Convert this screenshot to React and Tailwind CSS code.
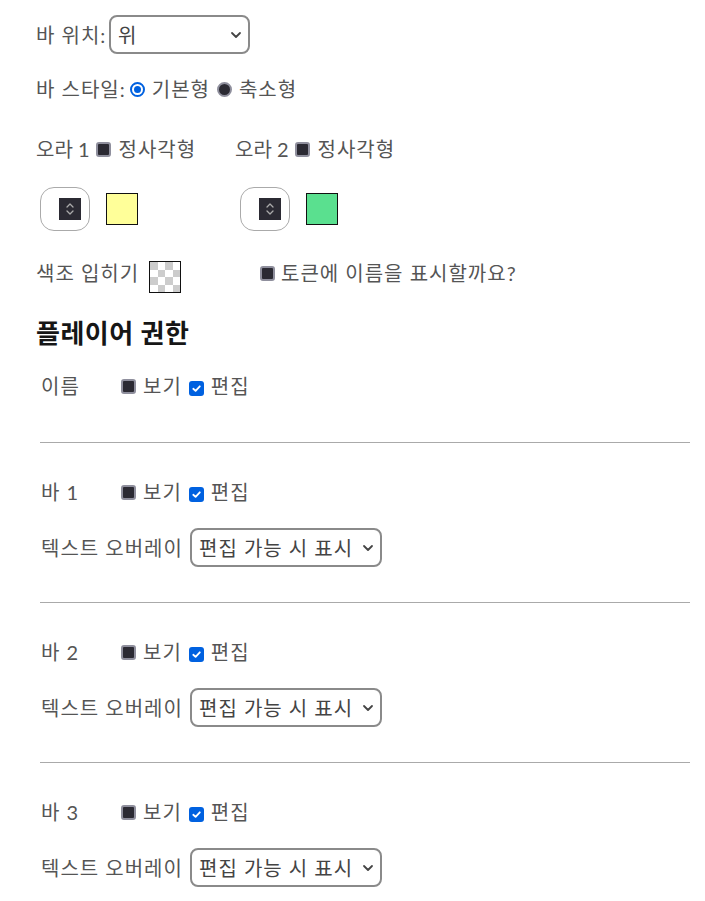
import React from "react";

const font = { fontFamily: '"Lato", "Noto Sans CJK KR", sans-serif' };

function Check({ checked }) {
  if (checked) {
    return (
      <span className="inline-flex h-[15px] w-[15px] shrink-0 items-center justify-center rounded-[3px] bg-[#0061e0]">
        <svg width="11" height="11" viewBox="0 0 12 12" fill="none">
          <path d="M2.5 6.3 L5 8.6 L9.6 3.6" stroke="#fff" strokeWidth="2" strokeLinecap="round" strokeLinejoin="round" />
        </svg>
      </span>
    );
  }
  return <span className="inline-block h-[15px] w-[15px] shrink-0 rounded-[3px] border-2 border-[#8f8f9d] bg-[#2b2a33]" />;
}

function Radio({ checked }) {
  if (checked) {
    return (
      <span className="inline-flex h-[15px] w-[15px] shrink-0 items-center justify-center rounded-full border-2 border-[#0061e0] bg-white">
        <span className="h-[7px] w-[7px] rounded-full bg-[#0061e0]" />
      </span>
    );
  }
  return <span className="inline-block h-[15px] w-[15px] shrink-0 rounded-full border-2 border-[#8f8f9d] bg-[#2b2a33]" />;
}

function Chevron() {
  return (
    <svg width="12" height="8" viewBox="0 0 12 8" fill="none">
      <path d="M2 2 L6 6 L10 2" stroke="#444" strokeWidth="1.8" strokeLinecap="round" strokeLinejoin="round" />
    </svg>
  );
}

function Select({ value, width }) {
  return (
    <div
      className="flex h-[39px] items-center justify-between rounded-[8px] border-2 border-[#8a8a8a] bg-white pl-[7px] pr-[6px] text-[#444]"
      style={{ width }}
    >
      <span className="whitespace-nowrap">{value}</span>
      <Chevron />
    </div>
  );
}

function Spinner() {
  return (
    <div className="flex h-[44px] w-[50px] items-center justify-end rounded-[14px] border border-[#aaa] bg-white pr-[8px]">
      <div className="flex h-[22px] w-[22px] flex-col items-center justify-center gap-[2px] bg-[#2b2a33]">
        <svg width="10" height="6" viewBox="0 0 10 6" fill="none">
          <path d="M2 5 L5 2 L8 5" stroke="#aaa" strokeWidth="1.3" strokeLinecap="round" strokeLinejoin="round" />
        </svg>
        <svg width="10" height="6" viewBox="0 0 10 6" fill="none">
          <path d="M2 1 L5 4 L8 1" stroke="#aaa" strokeWidth="1.3" strokeLinecap="round" strokeLinejoin="round" />
        </svg>
      </div>
    </div>
  );
}

function Checker() {
  const cells = [];
  for (let r = 0; r < 4; r++) {
    for (let c = 0; c < 4; c++) {
      cells.push(
        <div key={r + "-" + c} className={(r + c) % 2 === 0 ? "bg-[#cccccc]" : "bg-white"} />
      );
    }
  }
  return (
    <div className="grid h-[32px] w-[32px] shrink-0 grid-cols-4 grid-rows-4 border-[1.5px] border-[#111] bg-white">
      {cells}
    </div>
  );
}

function PermRow({ label }) {
  return (
    <div className="flex h-[24px] items-center">
      <span className="w-[80px]">{label}</span>
      <Check />
      <span className="ml-[7px]">보기</span>
      <span className="ml-[7px]"><Check checked /></span>
      <span className="ml-[7px]">편집</span>
    </div>
  );
}

function Overlay() {
  return (
    <div className="flex items-center">
      <span className="w-[149px] whitespace-nowrap">텍스트 오버레이</span>
      <Select value="편집 가능 시 표시" width={192} />
    </div>
  );
}

export default function App() {
  return (
    <div className="min-h-[901px] w-[705px] bg-white pl-[36px] pt-[15px] text-[20px] leading-[24px] tracking-[1px] text-[#555]" style={font}>
      <div className="flex items-center">
        <span className="w-[73px] whitespace-nowrap">바 위치:</span>
        <Select value="위" width={141} />
      </div>

      <div className="mt-[23px] flex h-[24px] items-center">
        <span className="mr-[4px]">바 스타일:</span>
        <Radio checked />
        <span className="ml-[7px] mr-[7px]">기본형</span>
        <Radio />
        <span className="ml-[7px]">축소형</span>
      </div>

      <div className="mt-[36px] flex h-[24px] items-center">
        <div className="flex w-[199px] items-center">
          <span className="mr-[6px] tracking-[0px]">오라 1</span>
          <Check />
          <span className="ml-[8px]">정사각형</span>
        </div>
        <div className="flex items-center">
          <span className="mr-[6px] tracking-[0px]">오라 2</span>
          <Check />
          <span className="ml-[8px]">정사각형</span>
        </div>
      </div>

      <div className="mt-[26px] flex items-center pl-[4px]">
        <div className="flex w-[200px] items-center gap-[16px]">
          <Spinner />
          <div className="h-[32px] w-[32px] border-[1.5px] border-[#111] bg-[#ffff99]" />
        </div>
        <div className="flex items-center gap-[16px]">
          <Spinner />
          <div className="h-[32px] w-[32px] border-[1.5px] border-[#111] bg-[#5ae08f]" />
        </div>
      </div>

      <div className="mt-[30px] flex items-start">
        <span className="w-[113px] whitespace-nowrap">색조 입히기</span>
        <Checker />
        <div className="ml-[79px] flex h-[24px] items-center">
          <Check />
          <span className="ml-[6px] whitespace-nowrap">토큰에 이름을 표시할까요?</span>
        </div>
      </div>

      <h2 className="mt-[25px] text-[26px] font-bold leading-[30px] tracking-[0.5px] text-[#161616]">플레이어 권한</h2>

      <div className="mr-[15px] pl-[5px]">
        <div className="mt-[26px]">
          <PermRow label="이름" />
        </div>

        {[1, 2, 3].map((n) => (
          <div key={n}>
            <div className="-ml-[1px] h-px bg-[#aaa]" style={{ marginTop: n === 1 ? 44 : 35 }} />
            <div className="mt-[37px]">
              <PermRow label={"바 " + n} />
            </div>
            <div className="mt-[24px]">
              <Overlay />
            </div>
          </div>
        ))}
      </div>
    </div>
  );
}
